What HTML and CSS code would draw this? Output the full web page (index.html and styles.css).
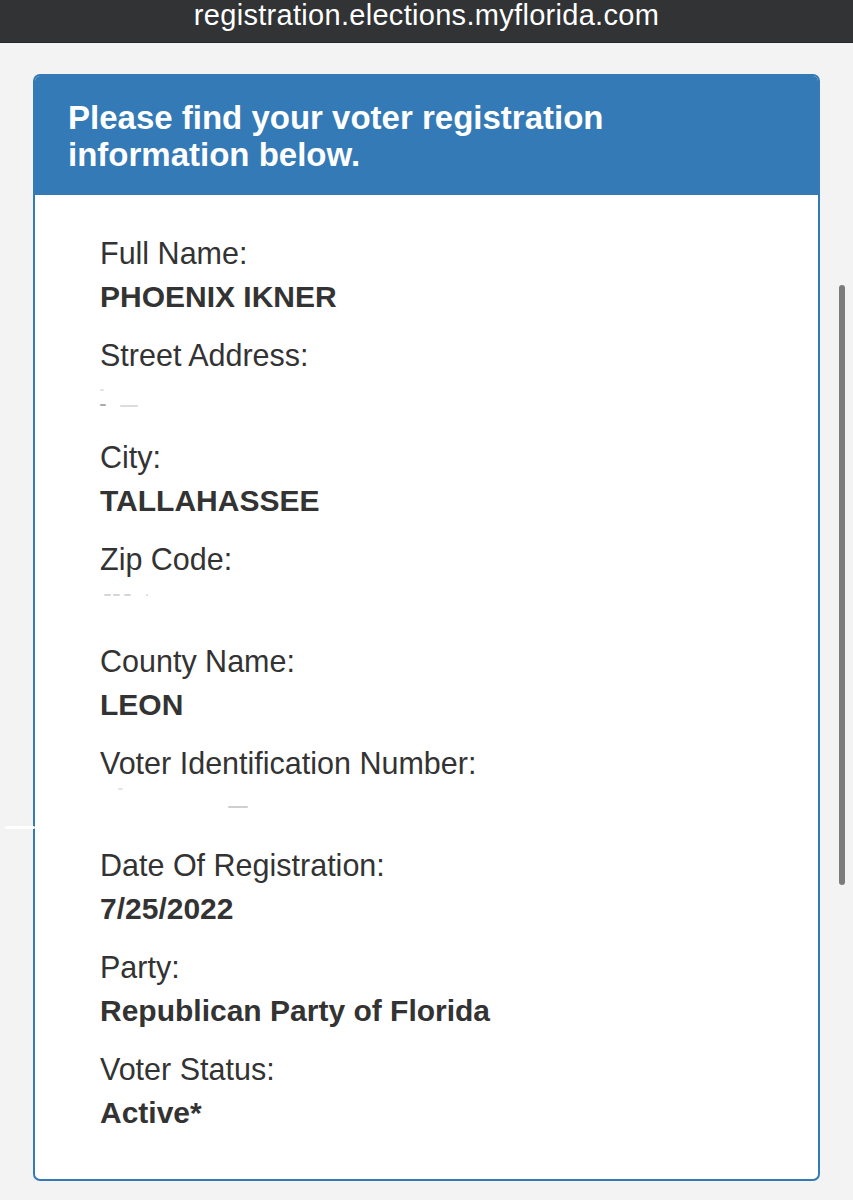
FILE: index.html
```html
<!DOCTYPE html>
<html lang="en">
<head>
<meta charset="utf-8">
<title>Voter Registration</title>
<link rel="stylesheet" href="styles.css">
</head>
<body>
<div class="urlbar">registration.elections.myflorida.com</div>
<main class="page">
  <section class="card">
    <header class="card-head">Please find your voter registration information below.</header>
    <div class="card-body">
      <div class="field"><div class="label">Full Name:</div><div class="value">PHOENIX IKNER</div></div>
      <div class="field"><div class="label">Street Address:</div>
        <div class="value redacted street"><i class="m1"></i><i class="m2"></i><i class="m3"></i></div></div>
      <div class="field"><div class="label">City:</div><div class="value">TALLAHASSEE</div></div>
      <div class="field"><div class="label">Zip Code:</div>
        <div class="value redacted zip"><i></i><i></i><i></i><i class="tiny"></i></div></div>
      <div class="field"><div class="label">County Name:</div><div class="value">LEON</div></div>
      <div class="field"><div class="label">Voter Identification Number:</div>
        <div class="value redacted vid"><i class="a"></i><i class="b"></i></div></div>
      <div class="field"><div class="label">Date Of Registration:</div><div class="value">7/25/2022</div></div>
      <div class="field"><div class="label">Party:</div><div class="value">Republican Party of Florida</div></div>
      <div class="field"><div class="label">Voter Status:</div><div class="value">Active*</div></div>
    </div>
  </section>
</main>
<div class="scrollbar"></div>
<div class="artifact"></div>
</body>
</html>
```
FILE: styles.css
```css
html, body {
  margin: 0;
  padding: 0;
  background: #f3f3f4;
  font-family: "Liberation Sans", Arial, sans-serif;
  color: #333;
}
.urlbar {
  height: 42px;
  background: #313335;
  border-bottom: 1px solid #26282a;
  color: #fff;
  text-align: center;
  font-size: 29px;
  line-height: 30px;
  letter-spacing: 0.3px;
  overflow: hidden;
}
.page {
  padding: 31px 33px 40px;
}
.card {
  border: 2px solid #337ab7;
  border-radius: 7px;
  background: #fff;
  overflow: hidden;
}
.card-head {
  background: #337ab7;
  color: #fff;
  font-weight: bold;
  font-size: 33px;
  line-height: 37px;
  padding: 23px 100px 22px 33px;
}
.card-body {
  padding: 37px 40px 45px 65px;
  display: flex;
  flex-direction: column;
  gap: 16px;
}
.label {
  font-size: 30.5px;
  line-height: 43px;
}
.value {
  font-size: 30px;
  font-weight: bold;
  line-height: 43px;
  min-height: 43px;
}
.redacted {
  position: relative;
}
.redacted i {
  position: absolute;
  display: block;
  height: 2px;
  background: #d6d6d6;
  border-radius: 1px;
}
.street .m1 { left: 0; top: 12px; width: 4px; background: #e2e2e2; }
.street .m2 { left: 0; top: 27px; width: 6px; background: #aaa; }
.street .m3 { left: 20px; top: 28px; width: 18px; background: #dcdcdc; }
.zip i { top: 13px; width: 7px; }
.zip i:nth-child(1) { left: 4px; }
.zip i:nth-child(2) { left: 13px; }
.zip i:nth-child(3) { left: 24px; }
.zip i.tiny { left: 46px; width: 2px; }
.vid .a { left: 18px; top: 3px; width: 5px; background: #e4e4e4; }
.vid .b { left: 128px; top: 21px; width: 20px; background: #cfcfcf; }
.scrollbar {
  position: absolute;
  left: 839px;
  top: 285px;
  width: 6px;
  height: 600px;
  border-radius: 3px;
  background: #7b7b7b;
}
.artifact {
  position: absolute;
  left: 5px;
  top: 826px;
  width: 30px;
  height: 3px;
  border-radius: 2px;
  background: #fff;
}
```
